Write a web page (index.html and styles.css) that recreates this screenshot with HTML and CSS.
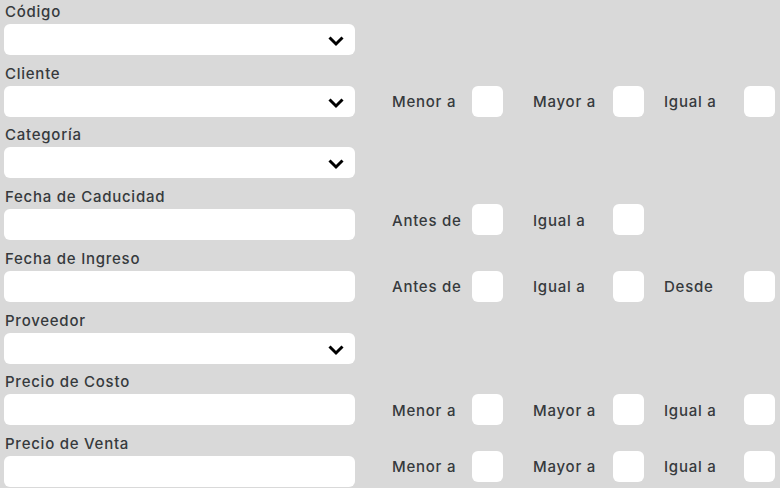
FILE: index.html
```html
<!DOCTYPE html>
<html lang="es">
<head>
<meta charset="utf-8">
<title>Filtros</title>
<link rel="stylesheet" href="styles.css">
</head>
<body>
<form class="form">
  <div class="group">
    <div class="field">
      <label class="label">Código</label>
      <div class="input select">
        <svg class="chevron" width="16" height="12" viewBox="0 0 16 12"><path d="M1.5 2.5 L8 9 L14.5 2.5" /></svg>
      </div>
    </div>
  </div>

  <div class="group">
    <div class="field">
      <label class="label">Cliente</label>
      <div class="input select">
        <svg class="chevron" width="16" height="12" viewBox="0 0 16 12"><path d="M1.5 2.5 L8 9 L14.5 2.5" /></svg>
      </div>
    </div>
    <div class="options">
      <div class="opt"><span class="opt-label">Menor a</span><span class="check"></span></div>
      <div class="opt"><span class="opt-label">Mayor a</span><span class="check"></span></div>
      <div class="opt"><span class="opt-label">Igual a</span><span class="check"></span></div>
    </div>
  </div>

  <div class="group">
    <div class="field">
      <label class="label">Categoría</label>
      <div class="input select">
        <svg class="chevron" width="16" height="12" viewBox="0 0 16 12"><path d="M1.5 2.5 L8 9 L14.5 2.5" /></svg>
      </div>
    </div>
  </div>

  <div class="group">
    <div class="field">
      <label class="label">Fecha de Caducidad</label>
      <div class="input"></div>
    </div>
    <div class="options raised">
      <div class="opt"><span class="opt-label">Antes de</span><span class="check"></span></div>
      <div class="opt"><span class="opt-label">Igual a</span><span class="check"></span></div>
    </div>
  </div>

  <div class="group">
    <div class="field">
      <label class="label">Fecha de Ingreso</label>
      <div class="input"></div>
    </div>
    <div class="options">
      <div class="opt"><span class="opt-label">Antes de</span><span class="check"></span></div>
      <div class="opt"><span class="opt-label">Igual a</span><span class="check"></span></div>
      <div class="opt"><span class="opt-label">Desde</span><span class="check"></span></div>
    </div>
  </div>

  <div class="group">
    <div class="field">
      <label class="label">Proveedor</label>
      <div class="input select">
        <svg class="chevron" width="16" height="12" viewBox="0 0 16 12"><path d="M1.5 2.5 L8 9 L14.5 2.5" /></svg>
      </div>
    </div>
  </div>

  <div class="group">
    <div class="field">
      <label class="label">Precio de Costo</label>
      <div class="input"></div>
    </div>
    <div class="options">
      <div class="opt"><span class="opt-label">Menor a</span><span class="check"></span></div>
      <div class="opt"><span class="opt-label">Mayor a</span><span class="check"></span></div>
      <div class="opt"><span class="opt-label">Igual a</span><span class="check"></span></div>
    </div>
  </div>

  <div class="group">
    <div class="field">
      <label class="label">Precio de Venta</label>
      <div class="input"></div>
    </div>
    <div class="options raised">
      <div class="opt"><span class="opt-label">Menor a</span><span class="check"></span></div>
      <div class="opt"><span class="opt-label">Mayor a</span><span class="check"></span></div>
      <div class="opt"><span class="opt-label">Igual a</span><span class="check"></span></div>
    </div>
  </div>
</form>
</body>
</html>
```

FILE: styles.css
```css
html, body {
  margin: 0;
  padding: 0;
  background: #d9d9d9;
}

body {
  font-family: Inter, "Open Sans", sans-serif;
  font-weight: 500;
  font-size: 15px;
  letter-spacing: 0.75px;
  color: #363a3d;
  width: 780px;
  height: 488px;
  overflow: hidden;
}

.form {
  display: flex;
  flex-direction: column;
  gap: 6.71px;
  padding-left: 4px;
}

.group {
  display: flex;
  align-items: flex-end;
  gap: 37px;
}

.field {
  display: flex;
  flex-direction: column;
  width: 351px;
  flex: none;
}

.label {
  display: block;
  height: 23px;
  line-height: 23px;
  margin-bottom: 1px;
  padding-left: 1px;
}

.input {
  position: relative;
  height: 31px;
  background: #ffffff;
  border-radius: 6px;
}

.chevron {
  position: absolute;
  right: 11px;
  top: 11px;
}

.chevron path {
  fill: none;
  stroke: #000000;
  stroke-width: 3;
}

.options {
  display: grid;
  grid-template-columns: 141px 131px 111px;
}

.options.raised {
  margin-bottom: 5px;
}

.opt {
  display: flex;
  align-items: center;
}

.opt-label {
  width: 80px;
  flex: none;
  padding-top: 1px;
}

.check {
  width: 31px;
  height: 31px;
  background: #ffffff;
  border-radius: 6px;
  flex: none;
}
```
